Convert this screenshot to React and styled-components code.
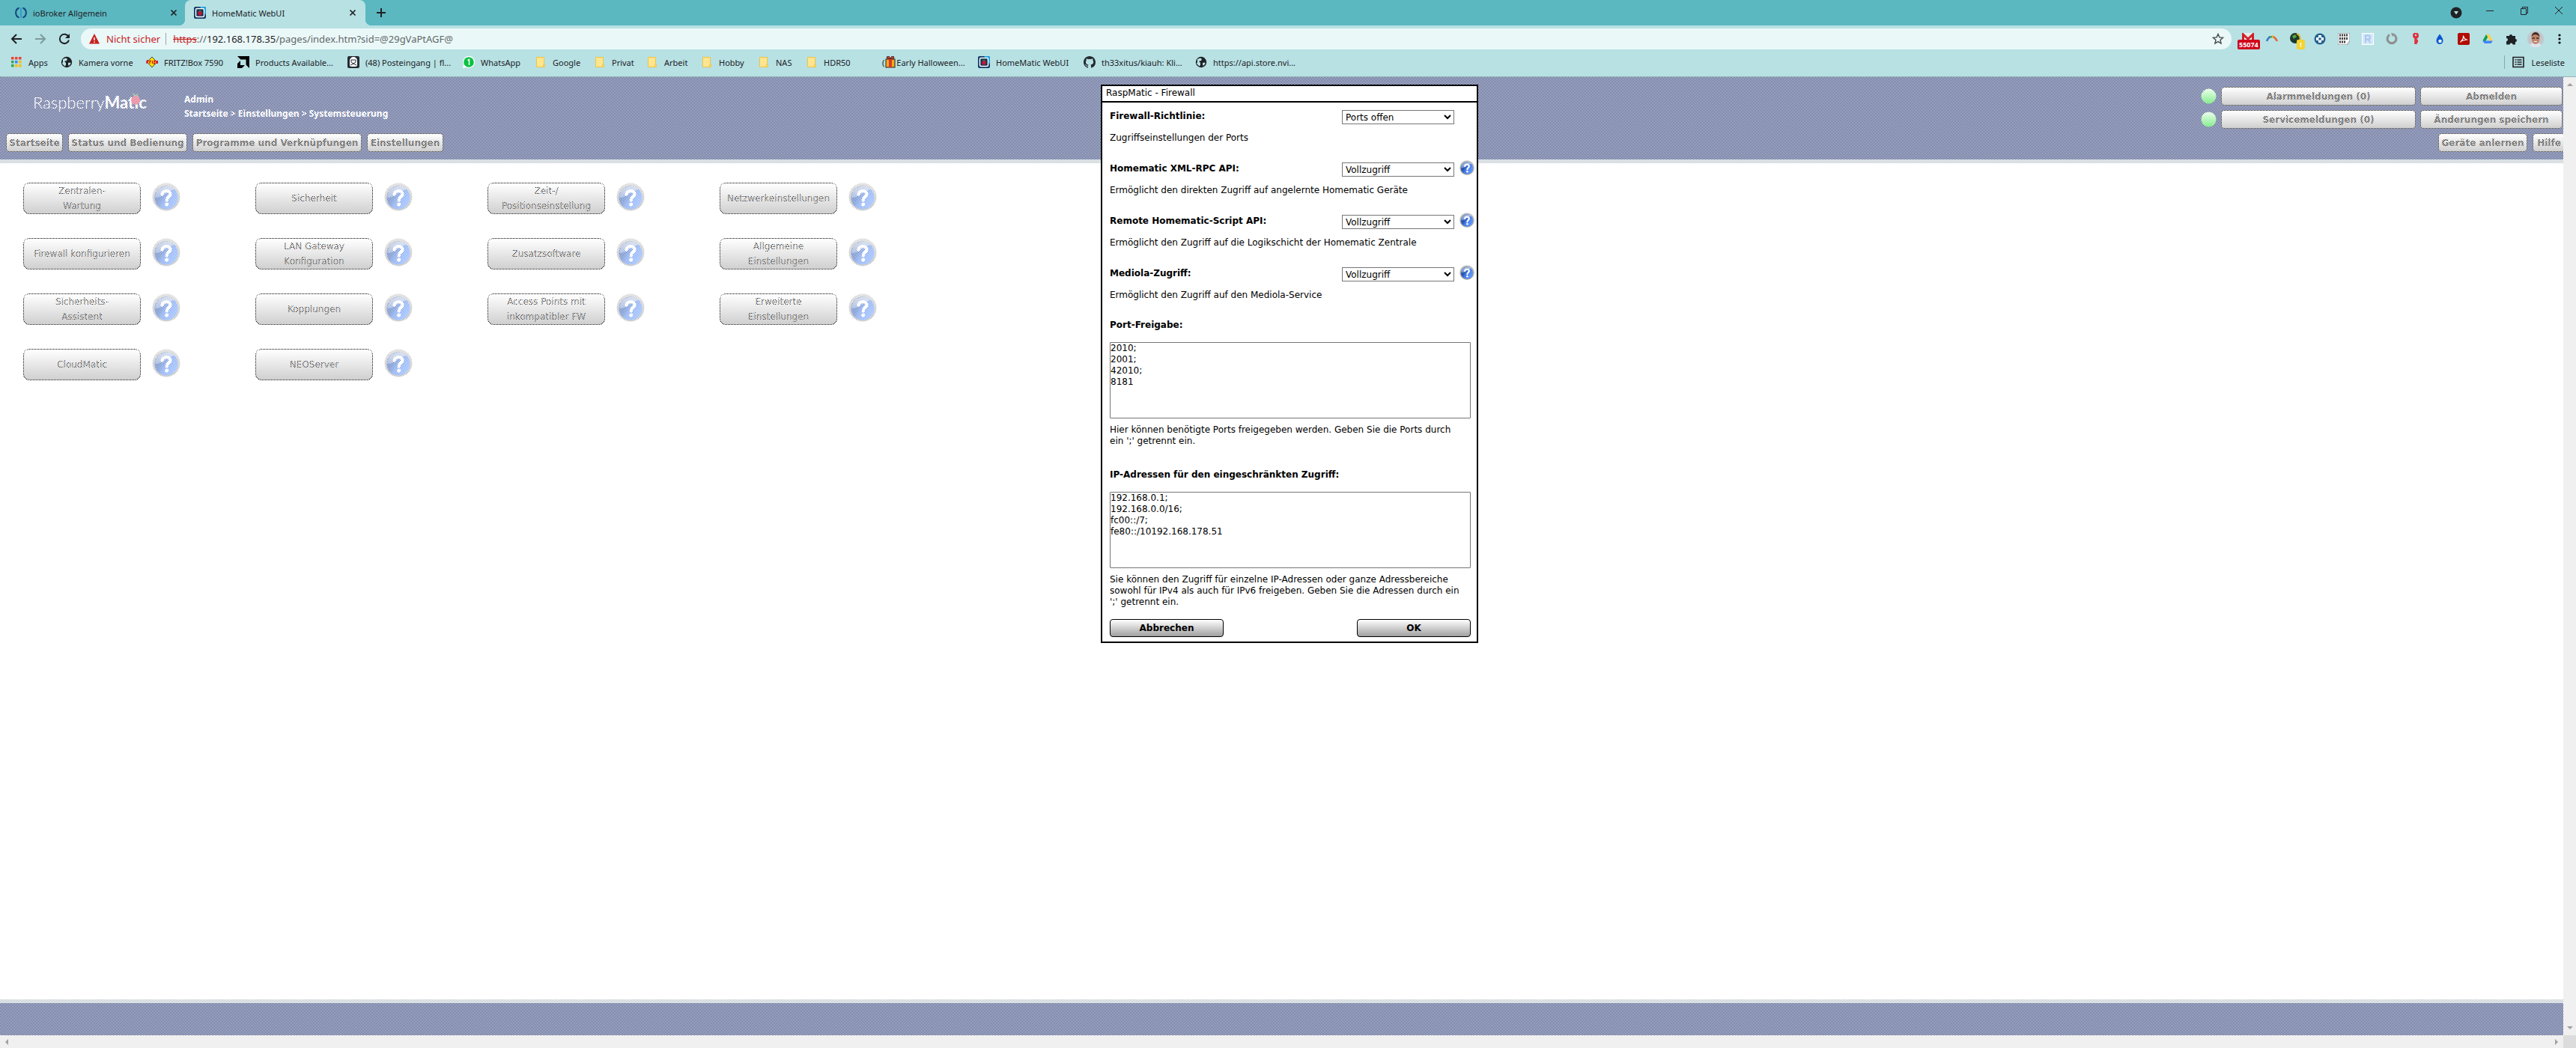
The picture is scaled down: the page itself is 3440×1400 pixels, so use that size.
import React from 'react';
import styled, { createGlobalStyle, css } from 'styled-components';

const ui = '"Noto Sans", "Open Sans", sans-serif';
const web = '"DejaVu Sans", Verdana, sans-serif';

const GlobalStyle = createGlobalStyle`
  * { box-sizing: border-box; }
  body { margin: 0; overflow: hidden; }
  button, select, textarea, input { font: inherit; color: inherit; margin: 0; }
  svg { display: block; flex: none; }
`;

/* ---------- browser frame ---------- */

const Browser = styled.div`
  height: 100vh;
  display: flex;
  flex-direction: column;
  font-family: ${ui};
  font-size: 11px;
  color: #202124;
  background: #b8e1e4;
`;
const TabStrip = styled.div`
  flex: none;
  height: 34px;
  display: flex;
  background: #5bb8c1;
`;
const Tab = styled.div`
  position: relative;
  width: ${p => (p.$active ? 241 : 247)}px;
  padding: 0 ${p => (p.$active ? 10 : 8)}px 0 ${p => (p.$active ? 12 : 20)}px;
  display: flex;
  align-items: center;
  gap: 8px;
  border-radius: 8px 8px 0 0;
  background: ${p => (p.$active ? '#b8e1e4' : 'transparent')};
  & > span { flex: 1; white-space: nowrap; }
  ${p => p.$active && css`
    &::before, &::after {
      content: '';
      position: absolute;
      bottom: 0;
      width: 8px;
      height: 8px;
    }
    &::before { left: -8px; background: radial-gradient(circle at 0 0, transparent 8px, #b8e1e4 8px); }
    &::after { right: -8px; background: radial-gradient(circle at 100% 0, transparent 8px, #b8e1e4 8px); }
  `}
`;
const IconButton = styled.button`
  display: grid;
  place-items: center;
  width: ${p => p.$w || 32}px;
  height: ${p => p.$h || 32}px;
  padding: 0;
  border: 0;
  background: none;
`;
const Spacer = styled.div`flex: 1;`;
const Toolbar = styled.div`
  flex: none;
  height: 36px;
  padding: 0 6px;
  display: flex;
  align-items: center;
`;
const NavButtons = styled.div`
  display: flex;
  width: 102px;
`;
const Omnibox = styled.div`
  flex: 1;
  height: 28px;
  display: flex;
  align-items: center;
  padding: 0 5px 0 11px;
  border-radius: 14px;
  background: #ebf8f8;
  font-size: 13px;
`;
const Insecure = styled.span`
  margin: 0 6px 0 9px;
  padding-right: 7px;
  border-right: 1px solid #9aa5a6;
  line-height: 16px;
  color: #c5221f;
  white-space: nowrap;
`;
const Url = styled.span`
  flex: 1;
  padding-left: 3px;
  color: #5f6868;
  s { color: #c5221f; }
  b { font-weight: 400; color: #202124; }
`;
const Extensions = styled.div`
  display: flex;
  padding-left: 6px;
`;
const Bookmarks = styled.nav`
  flex: none;
  height: 33px;
  padding: 0 15px 6px 14px;
  display: flex;
  align-items: center;
  border-bottom: 1px solid #93b4b6;
`;
const Bookmark = styled.a`
  flex: none;
  width: ${p => p.$w}px;
  display: flex;
  align-items: center;
  gap: ${p => (p.$tight ? 1 : 8)}px;
  color: inherit;
  text-decoration: none;
  white-space: nowrap;
`;
const ReadingList = styled.button`
  height: 18px;
  display: flex;
  align-items: center;
  gap: 9px;
  padding: 0 0 0 10px;
  border: 0;
  border-left: 1px solid #8aa9ab;
  background: none;
`;

/* ---------- scrolled page ---------- */

const Viewport = styled.div`
  flex: 1;
  min-height: 0;
  display: grid;
  grid-template: minmax(0, 1fr) 17px / minmax(0, 1fr) 17px;
  background: #f0f0f0;
`;
const Clip = styled.div`overflow: hidden;`;
const ScrollBar = styled.div`
  display: flex;
  flex-direction: ${p => (p.$vertical ? 'column' : 'row')};
  align-items: center;
  justify-content: space-between;
  padding: ${p => (p.$vertical ? '6px 0' : '0 6px')};
`;
const Corner = styled.div`background: #dcdcdc;`;
const Page = styled.div`
  position: relative;
  width: calc(100% + 21px);
  height: 100%;
  display: flex;
  flex-direction: column;
  font-family: ${web};
  font-size: 12px;
  color: #000;
  background: #fff;
`;
const Header = styled.header`
  flex: none;
  height: 115px;
  display: flex;
  justify-content: space-between;
  padding: 13px 18px 0 8px;
  background: #1b2c6c;
  border-bottom: 5px solid #b4c0c6;
`;
const HeaderSide = styled.div`
  display: flex;
  flex-direction: column;
  gap: 6px;
`;
const Brand = styled.div`
  height: 56px;
  display: flex;
  color: #fff;
`;
const Logo = styled.div`
  width: 238px;
  padding: 6px 0 0 36px;
  display: flex;
  font: 300 22px/30px Lato, sans-serif;
  b { font-weight: 700; }
`;
const LogoMark = styled.svg`
  position: absolute;
  top: 20px;
  left: 174px;
`;
const Crumbs = styled.div`
  padding-top: 7px;
  font-family: ${ui};
  font-size: 12px;
  font-weight: 700;
  line-height: 19px;
`;
const Row = styled.div`
  display: flex;
  align-items: center;
  gap: ${p => p.$gap || 6}px;
`;
const glossy = css`
  border: 1px solid #000;
  background: linear-gradient(#fff, #a0a0a0);
`;
const MenuButton = styled.button`
  ${glossy}
  width: ${p => p.$w}px;
  height: 25px;
  padding: 0;
  border-radius: 4px;
  font-size: 12px;
  font-weight: 700;
  white-space: nowrap;
`;
const StatusRow = styled(Row)`padding-right: 4px;`;
const ActionRow = styled(Row)`
  justify-content: flex-end;
`;
const Main = styled.main`
  flex: 1;
  display: grid;
  grid-template-columns: repeat(4, 310px);
  grid-auto-rows: 74px;
  padding: 26px 31px;
`;
const Entry = styled.div`
  display: flex;
  align-items: flex-start;
  gap: 15px;
`;
const EntryButton = styled.button`
  ${glossy}
  width: 157px;
  height: 42px;
  padding: 0;
  border-radius: 8px;
  font-size: 12px;
  line-height: 20px;
  white-space: pre-line;
`;
const HelpButton = styled.button`
  padding: 0;
  border: 0;
  background: none;
`;
const Footer = styled.footer`
  flex: none;
  height: 48px;
  background: #1b2c6c;
  border-top: 5px solid #b4c0c6;
`;

/* ---------- modal ---------- */

const Mask = styled.div`
  position: absolute;
  inset: 0;
  display: flex;
  justify-content: center;
  align-items: flex-start;
  padding-top: 10px;
  background: conic-gradient(#fff 25%, transparent 0 50%, #fff 0 75%, transparent 0) 0 0 / 2px 2px;
`;
const Dialog = styled.form`
  width: 504px;
  border: 2px solid #000;
  background: #fff;
  font-size: 12px;
  line-height: 15px;
`;
const DialogTitle = styled.div`
  padding: 2px 5px 3px;
  border-bottom: 2px solid #000;
`;
const DialogBody = styled.div`padding: 10px 0 6px 10px;`;
const Setting = styled.div`
  height: 70px;
  display: grid;
  grid-template: 30px 15px / 310px 150px 1fr;
  align-items: start;
  label { font-weight: 700; padding-top: 1px; }
  p { grid-column: 1 / -1; margin: 0; }
  ${HelpButton} { justify-self: start; margin: -3px 0 0 7px; }
`;
const Select = styled.select`
  width: 150px;
  height: 19px;
  padding: 0;
  border: 1px solid #767676;
  background: #fff;
`;
const Field = styled.div`
  display: flex;
  flex-direction: column;
  margin-bottom: ${p => p.$after}px;
  label { font-weight: 700; margin-bottom: 15px; }
  p { margin: 8px 0 0; white-space: nowrap; }
`;
const TextArea = styled.textarea`
  width: 482px;
  height: 102px;
  padding: 0;
  border: 1px solid #767676;
  border-radius: 1px;
  resize: none;
`;
const DialogActions = styled.div`
  display: flex;
  justify-content: space-between;
  width: 482px;
`;
const DialogButton = styled.button`
  ${glossy}
  width: 152px;
  height: 24px;
  padding: 0;
  border-radius: 4px;
  font-weight: 700;
`;

/* ---------- drawings ---------- */

const Help = ({ size }) => (
  <svg width={size} height={size} viewBox="0 0 38 38">
    <defs>
      <linearGradient id="rim" x1="0" y1="0" x2="0" y2="1">
        <stop offset="0" stopColor="#b4b4b4" /><stop offset="1" stopColor="#808080" />
      </linearGradient>
      <linearGradient id="ball" x1="0" y1="0" x2="1" y2=".6">
        <stop offset="0" stopColor="#1c479c" /><stop offset=".4" stopColor="#2455b4" />
        <stop offset=".6" stopColor="#4a7ee8" /><stop offset="1" stopColor="#5f98ff" />
      </linearGradient>
      <linearGradient id="shine" x1="0" y1="0" x2="0" y2="1">
        <stop offset="0" stopColor="#dfe4ee" /><stop offset="1" stopColor="#7f9cd8" />
      </linearGradient>
    </defs>
    <circle cx="19" cy="19" r="18.500" fill="url(#rim)" opacity=".75" />
    <circle cx="19" cy="20" r="15.500" fill="url(#ball)" />
    <path d="M4 20Q12 20 19 14Q27 9 30 9A15.500 15.500 0 0 0 4 20Z" fill="url(#shine)" opacity=".75" />
    <path d="M13.500 15.500C14 9.500 25 9.500 24.500 15.500C24.200 19 19.800 19 19.800 23.500" fill="none" stroke="#fff" strokeWidth="4" strokeLinecap="round" />
    <circle cx="19.700" cy="29" r="2.500" fill="#fff" />
  </svg>
);
const Led = () => (
  <svg width="21" height="21" viewBox="0 0 21 21">
    <defs>
      <linearGradient id="led" x1="0" y1="0" x2="0" y2="1">
        <stop offset="0" stopColor="#d8ffd8" /><stop offset="1" stopColor="#10d820" />
      </linearGradient>
    </defs>
    <circle cx="10.500" cy="10.500" r="10" fill="url(#led)" />
  </svg>
);
const Arrow = ({ d, w = 8, h = 8 }) => (
  <svg width={w} height={h} viewBox={`0 0 ${w} ${h}`}><path d={d} fill="#a0a0a0" /></svg>
);
const Line = ({ d, size = 16, w = 2, color = '#202124' }) => (
  <svg width={size} height={size} viewBox="0 0 16 16" fill="none" stroke={color} strokeWidth={w}><path d={d} /></svg>
);
const Close = () => <Line size={14} w={2} d="M4 4l8 8M12 4l-8 8" />;
const Globe = () => (
  <svg width="16" height="16" viewBox="0 0 16 16">
    <circle cx="8" cy="8" r="7.200" fill="#202124" />
    <path d="M3 4l4-1.500 2 1.500-1 2-3 1 2 2v3l-1.500 1.500L2 10l1-2zM10 9l3-.5.500 1.500-2.500 3-1-1.500z" fill="#b8e1e4" />
  </svg>
);
const Folder = () => (
  <svg width="16" height="16" viewBox="0 0 16 16">
    <path d="M2.500 1.500h10v10h1v3h-11z" fill="#ffe58f" stroke="#ecc545" />
    <path d="M11.500 14.500v-3h2" fill="none" stroke="#ecc545" />
  </svg>
);
const HomeMatic = () => (
  <svg width="16" height="16" viewBox="0 0 16 16">
    <rect width="16" height="16" rx="2" fill="#123a66" /><path d="M8 0h6a2 2 0 0 1 2 2v9z" fill="#1fa5e0" />
    <rect x="2.500" y="2.500" width="11" height="11" rx="1.500" fill="#1b3450" stroke="#fff" strokeWidth="1.500" />
    <circle cx="8" cy="8.800" r="2.800" fill="#c2143c" /><path d="M6 5.500h4L8 7z" fill="#3f9b46" />
  </svg>
);
const AppsGrid = () => {
  const c = ['#ea4335', '#ea4335', '#ea4335', '#34a853', '#4285f4', '#fbbc05', '#34a853', '#fbbc05', '#fbbc05'];
  return (
    <svg width="16" height="16" viewBox="0 0 16 16">
      {c.map((f, i) => <rect key={i} x={1 + (i % 3) * 5} y={1 + Math.floor(i / 3) * 5} width="3.500" height="3.500" fill={f} />)}
    </svg>
  );
};
const Fritz = () => (
  <svg width="16" height="16" viewBox="0 0 16 16">
    <path d="M8 1l6.500 7L8 15 1.500 8z" fill="#ffe100" stroke="#222" strokeWidth=".8" />
    <path d="M1 6v4M1 6h2.500M1 8h2M5 10V6.500h2M8.500 6v4M10 6.500h2L10.500 10H12M14 6v4M15.500 6v4" fill="none" stroke="#d0102a" strokeWidth="1.300" />
  </svg>
);
const Amd = () => (
  <svg width="16" height="16" viewBox="0 0 16 16"><path d="M0 0h16v16l-4.500-4.500v-7h-7zM4 6v6h6l-4 4H0V10z" fill="#000" /></svg>
);
const Mail = () => (
  <svg width="16" height="16" viewBox="0 0 16 16">
    <rect width="16" height="16" rx="2" fill="#252a33" />
    <path d="M3 13V6a5 5 0 0 1 10 0v7l-2 1H5z" fill="#fff" /><path d="M5 5h6v3l-3 2-3-2zM4 12l4-2 4 2" fill="none" stroke="#252a33" />
  </svg>
);
const WhatsApp = () => (
  <svg width="16" height="16" viewBox="0 0 16 16">
    <path d="M0 16l1-4.500A8 8 0 1 1 4.500 15z" fill="#fff" /><circle cx="8" cy="8" r="6.800" fill="#0bc143" />
    <path d="M6.500 5.500L8.500 4.500V12" fill="none" stroke="#fff" strokeWidth="1.500" />
  </svg>
);
const Gift = () => (
  <svg width="14" height="16" viewBox="0 0 14 16">
    <path d="M2 1l3-1 2 3 2-3 3 1-1 3H3z" fill="#d9382a" stroke="#222" strokeWidth=".8" />
    <rect x="1" y="4" width="12" height="11" fill="#f7a81b" stroke="#222" /><path d="M5 4h4v11H5z" fill="#d9382a" />
  </svg>
);
const GitHub = () => (
  <svg width="16" height="16" viewBox="0 0 16 16">
    <path fill="#24292f" d="M8 0C3.580 0 0 3.580 0 8c0 3.540 2.290 6.530 5.470 7.590.4.070.55-.17.55-.38 0-.19-.01-.82-.01-1.490-2.010.37-2.530-.49-2.690-.94-.09-.23-.48-.94-.82-1.130-.28-.15-.68-.52-.01-.53.63-.01 1.080.58 1.230.82.72 1.210 1.870.87 2.330.66.070-.52.28-.87.51-1.070-1.780-.2-3.640-.89-3.640-3.950 0-.87.31-1.590.82-2.150-.08-.2-.36-1.020.08-2.120 0 0 .67-.21 2.200.82a7.600 7.600 0 0 1 4 0c1.530-1.040 2.200-.82 2.200-.82.44 1.100.16 1.920.08 2.120.51.56.82 1.270.82 2.150 0 3.070-1.870 3.750-3.650 3.950.29.25.54.73.54 1.480 0 1.070-.01 1.930-.01 2.200 0 .21.15.46.55.38A8 8 0 0 0 16 8c0-4.420-3.580-8-8-8z" />
  </svg>
);
const IoBroker = () => (
  <svg width="16" height="16" viewBox="0 0 16 16" fill="none">
    <path d="M5.500 1.500a7 7 0 0 0 0 13M10.500 1.500a7 7 0 0 1 0 13" stroke="#144578" strokeWidth="2" /><path d="M8 1v14" stroke="#3399cc" strokeWidth="1.800" />
  </svg>
);
const Badge = styled.span`
  position: absolute;
  left: ${p => p.$x}px;
  bottom: -6px;
  padding: 0 2px;
  border-radius: 2px;
  background: ${p => p.$bg};
  color: #fff;
  font-size: 9px;
  font-weight: 700;
  line-height: 13px;
`;
const Badged = styled.span`position: relative;`;

const S = ({ children }) => <svg width="16" height="16" viewBox="0 0 16 16">{children}</svg>;
const extensions = [
  ['Gmail', <Badged><S><path d="M0 0h16v14H0z" fill="#e8eaea" /><path d="M1.500 14V2L8 8l6.500-6v12" fill="none" stroke="#d0202a" strokeWidth="3" /></S><Badge $x={-6} $bg="#d0021b">55074</Badge></Badged>],
  ['Bogen', <S><path d="M1 11Q3 6 6 5" fill="none" stroke="#3a78c8" strokeWidth="2.500" /><path d="M5 5.500L9 5" stroke="#3fa656" strokeWidth="2.500" /><path d="M8 4.500Q9.500 4.500 10.500 5.500" fill="none" stroke="#f0b429" strokeWidth="2.500" /><path d="M10 5Q13 7 15 11" fill="none" stroke="#e8622c" strokeWidth="2.500" /></S>],
  ['Weltkugel', <Badged><S><circle cx="7" cy="7" r="7" fill="#1d3a30" /><path d="M3 4l4-2 2 3-4 3z" fill="#5fa33c" /><path d="M9 1a7 7 0 0 1 2 12" fill="none" stroke="#e0b826" strokeWidth="2" /></S><Badge $x={9} $bg="#f5d32f">&nbsp;!&nbsp;</Badge></Badged>],
  ['Kreuz', <S><circle cx="8" cy="8" r="7.500" fill="#24628f" /><path d="M8 3v10M3 8h10" stroke="#fff" strokeWidth="4" /><path d="M8 6v4M6 8h4" stroke="#24628f" strokeWidth="1.500" /></S>],
  ['Bits', <S><path d="M0 0h16v11l-4 5H0z" fill="#f4f6f6" stroke="#888" /><path d="M2 3h12M2 7.500h12M2 12h8" stroke="#444" strokeWidth="3" strokeDasharray="2 1" /></S>],
  ['R', <S><rect x=".5" y=".5" width="15" height="15" fill="#d4e8f8" stroke="#fff" /><path d="M5 13V3.500h3.500a2.500 2.500 0 0 1 0 5H5M8 8.500l3.500 4.500" fill="none" stroke="#a8c8ee" strokeWidth="2" /></S>],
  ['Ring', <S><path d="M5 2.500a6 6 0 1 0 6 0" fill="none" stroke="#8d8f8f" strokeWidth="3" /><path d="M7 0l5 1-3 4z" fill="#8d8f8f" /></S>],
  ['Schlüssel', <S><circle cx="8" cy="3.500" r="4" fill="#e0303c" /><path d="M8 5v10M9 11h2" stroke="#e0303c" strokeWidth="3.500" /><circle cx="8" cy="3" r="1.200" fill="#b8e1e4" /></S>],
  ['Tropfen', <S><path d="M8 1.500Q12.500 7 12.500 10.500a4.500 4.500 0 0 1-9 0Q3.500 7 8 1.500z" fill="#0b57d0" /><circle cx="8.500" cy="11" r="2.300" fill="#e6f6f8" /></S>],
  ['PDF', <S><rect width="16" height="16" rx="2" fill="#b30b00" /><path d="M7.500 3.500Q8 8 4 12q-.500-1.500 8-3Q8 7.500 7.500 3.500z" fill="none" stroke="#fff" strokeWidth="1.200" /></S>],
  ['Drive', <S><path d="M6 2h4L4 13.500 1.500 10z" fill="#0f9d58" /><path d="M6 2h4l5 8.500h-4z" fill="#ffcf48" /><path d="M1.500 11L4 14h8.500l2.500-3.500H4z" fill="#4285f4" /></S>],
  ['Erweiterungen', <S><path d="M1 4h4a2 2 0 1 1 4 0h4v4a2 2 0 1 1 0 4v3.500H9.500a2 2 0 1 0-4 0H1V11a2 2 0 1 0 0-4z" fill="#202124" /></S>],
  ['Profil', <svg width="22" height="22" viewBox="0 0 22 22"><circle cx="11" cy="11" r="11" fill="#c3c6cc" /><path d="M3 19q8-7 16 0a11 11 0 0 1-16 0z" fill="#dfe4ee" /><ellipse cx="11" cy="10.500" rx="5.500" ry="7.500" fill="#c08468" /><path d="M5.500 8.500Q6 2 11 2t5.500 6.500Q14 5 11 5 7 5 5.500 8.500z" fill="#3e2a1e" /><path d="M6.500 10h3.500M12 10h3.500" stroke="#3a2c28" strokeWidth="1.500" /><path d="M9 14.500h4" stroke="#fff" /></svg>],
  ['Menü', <S><circle cx="8" cy="3" r="1.600" /><circle cx="8" cy="8" r="1.600" /><circle cx="8" cy="13" r="1.600" /></S>],
];

const bookmarks = [
  ['Apps', 67, AppsGrid], ['Kamera vorne', 114, Globe], ['FRITZ!Box 7590', 122, Fritz],
  ['Products Available...', 147, Amd], ['(48) Posteingang | fl...', 154, Mail], ['WhatsApp', 96, WhatsApp],
  ['Google', 79, Folder], ['Privat', 70, Folder], ['Arbeit', 73, Folder], ['Hobby', 76, Folder],
  ['NAS', 64, Folder], ['HDR50', 102, Folder], ['Early Halloween...', 128, Gift, '('],
  ['HomeMatic WebUI', 141, HomeMatic], ['th33xitus/kiauh: Kli...', 149, GitHub], ['https://api.store.nvi...', 150, Globe],
];

const entries = [
  'Zentralen-\nWartung', 'Sicherheit', 'Zeit-/\nPositionseinstellung', 'Netzwerkeinstellungen',
  'Firewall konfigurieren', 'LAN Gateway\nKonfiguration', 'Zusatzsoftware', 'Allgemeine\nEinstellungen',
  'Sicherheits-\nAssistent', 'Kopplungen', 'Access Points mit\ninkompatibler FW', 'Erweiterte\nEinstellungen',
  'CloudMatic', 'NEOServer',
];

const settings = [
  ['policy', 'Firewall-Richtlinie:', 'Ports offen', 'Zugriffseinstellungen der Ports', false],
  ['xmlrpc', 'Homematic XML-RPC API:', 'Vollzugriff', 'Ermöglicht den direkten Zugriff auf angelernte Homematic Geräte', true],
  ['script', 'Remote Homematic-Script API:', 'Vollzugriff', 'Ermöglicht den Zugriff auf die Logikschicht der Homematic Zentrale', true],
  ['mediola', 'Mediola-Zugriff:', 'Vollzugriff', 'Ermöglicht den Zugriff auf den Mediola-Service', true],
];

function FirewallDialog() {
  return (
    <Dialog role="dialog" aria-label="RaspMatic - Firewall">
      <DialogTitle>RaspMatic - Firewall</DialogTitle>
      <DialogBody>
        {settings.map(([id, label, value, text, help]) => (
          <Setting key={id}>
            <label htmlFor={id}>{label}</label>
            <Select id={id}><option>{value}</option></Select>
            {help ? <HelpButton type="button" aria-label="Hilfe"><Help size={20} /></HelpButton> : <span />}
            <p>{text}</p>
          </Setting>
        ))}
        <Field $after={30}>
          <label htmlFor="ports">Port-Freigabe:</label>
          <TextArea id="ports" spellCheck={false} defaultValue={'2010;\n2001;\n42010;\n8181'} />
          <p>Hier können benötigte Ports freigegeben werden. Geben Sie die Ports durch<br />ein ';' getrennt ein.</p>
        </Field>
        <Field $after={15}>
          <label htmlFor="ips">IP-Adressen für den eingeschränkten Zugriff:</label>
          <TextArea id="ips" spellCheck={false} defaultValue={'192.168.0.1;\n192.168.0.0/16;\nfc00::/7;\nfe80::/10192.168.178.51'} />
          <p>Sie können den Zugriff für einzelne IP-Adressen oder ganze Adressbereiche<br />sowohl für IPv4 als auch für IPv6 freigeben. Geben Sie die Adressen durch ein<br />';' getrennt ein.</p>
        </Field>
        <DialogActions>
          <DialogButton type="button">Abbrechen</DialogButton>
          <DialogButton type="button">OK</DialogButton>
        </DialogActions>
      </DialogBody>
    </Dialog>
  );
}

export default function App() {
  return (
    <Browser>
      <GlobalStyle />
      <TabStrip>
        <Tab><IoBroker /><span>ioBroker Allgemein</span><IconButton $w={14} $h={16} aria-label="Tab schließen"><Close /></IconButton></Tab>
        <Tab $active><HomeMatic /><span>HomeMatic WebUI</span><IconButton $w={14} $h={16} aria-label="Tab schließen"><Close /></IconButton></Tab>
        <IconButton $w={42} $h={34} aria-label="Neuer Tab"><Line d="M8 2v12M2 8h12" /></IconButton>
        <Spacer />
        <IconButton $w={44} $h={34} aria-label="Tabs durchsuchen">
          <svg width="16" height="16" viewBox="0 0 16 16"><circle cx="8" cy="8" r="7.500" fill="#202124" /><path d="M5 6h6l-3 4.500z" fill="#b8e1e4" /></svg>
        </IconButton>
        <IconButton $w={46} $h={28} aria-label="Minimieren"><Line w={1} d="M3 8.500h10" /></IconButton>
        <IconButton $w={46} $h={28} aria-label="Verkleinern"><Line w={1} d="M3.500 5.500h7v8h-7zM5.500 5V3.500h7v8H11" /></IconButton>
        <IconButton $w={46} $h={28} aria-label="Schließen"><Line w={1} d="M3 3l10 10M13 3L3 13" /></IconButton>
      </TabStrip>
      <Toolbar>
        <NavButtons>
          <IconButton aria-label="Zurück"><Line d="M15 8H2.500M8 2L2 8l6 6" /></IconButton>
          <IconButton aria-label="Vorwärts"><Line color="#7d9a9c" d="M1 8h12.500M8 2l6 6-6 6" /></IconButton>
          <IconButton aria-label="Neu laden"><svg width="16" height="16" viewBox="0 0 16 16"><path d="M13.500 5A6.200 6.200 0 1 0 14 9.500" fill="none" stroke="#202124" strokeWidth="2" /><path d="M15 1v6H9z" fill="#202124" /></svg></IconButton>
        </NavButtons>
        <Omnibox>
          <svg width="14" height="14" viewBox="0 0 14 14"><path d="M7 0l7 13.500H0z" fill="#c5221f" /><path d="M7 5v4M7 10.500v1.500" stroke="#fff" strokeWidth="1.500" /></svg>
          <Insecure>Nicht sicher</Insecure>
          <Url><s>https</s>://<b>192.168.178.35</b>/pages/index.htm?sid=@29gVaPtAGF@</Url>
          <IconButton $w={26} $h={28} aria-label="Lesezeichen">
            <svg width="16" height="16" viewBox="0 0 16 16"><path d="M8 1.500l1.900 4.400 4.700.4-3.600 3.100 1.100 4.700L8 11.600l-4.100 2.500L5 9.400 1.400 6.300l4.700-.4z" fill="none" stroke="#454a4d" strokeWidth="1.400" /></svg>
          </IconButton>
        </Omnibox>
        <Extensions>
          {extensions.map(([name, icon]) => <IconButton key={name} aria-label={name}>{icon}</IconButton>)}
        </Extensions>
      </Toolbar>
      <Bookmarks>
        {bookmarks.map(([name, w, Icon, lead]) => (
          <Bookmark key={name} href="#" $w={w} $tight={!!lead}>{lead}<Icon />{name}</Bookmark>
        ))}
        <Spacer />
        <ReadingList>
          <svg width="16" height="16" viewBox="0 0 16 16"><path d="M1 1.500h14v13H1z" fill="none" stroke="#202124" strokeWidth="1.600" /><path d="M3.500 5h2M3.500 8h2M3.500 11h2M6.500 5h6M6.500 8h6M6.500 11h6" stroke="#202124" strokeWidth="1.500" /></svg>
          Leseliste
        </ReadingList>
      </Bookmarks>
      <Viewport>
        <Clip>
          <Page>
            <Header>
              <HeaderSide>
                <Brand>
                  <Logo>Raspberry<b>Matic</b></Logo>
                  <LogoMark width="14" height="18" viewBox="0 0 14 18"><path d="M3 1l4 3 4-3-2 5H5z" fill="#6c8f5a" /><circle cx="7" cy="11" r="6" fill="#d8385c" /></LogoMark>
                  <Crumbs>Admin<br />Startseite &gt; Einstellungen &gt; Systemsteuerung</Crumbs>
                </Brand>
                <Row $gap={7}>
                  <MenuButton $w={76}>Startseite</MenuButton>
                  <MenuButton $w={159}>Status und Bedienung</MenuButton>
                  <MenuButton $w={226}>Programme und Verknüpfungen</MenuButton>
                  <MenuButton $w={102}>Einstellungen</MenuButton>
                </Row>
              </HeaderSide>
              <HeaderSide>
                <StatusRow><Led /><MenuButton $w={260}>Alarmmeldungen (0)</MenuButton><MenuButton $w={190}>Abmelden</MenuButton></StatusRow>
                <StatusRow><Led /><MenuButton $w={260}>Servicemeldungen (0)</MenuButton><MenuButton $w={190}>Änderungen speichern</MenuButton></StatusRow>
                <ActionRow $gap={7}><MenuButton $w={119}>Geräte anlernen</MenuButton><MenuButton $w={44}>Hilfe</MenuButton></ActionRow>
              </HeaderSide>
            </Header>
            <Main>
              {entries.map(name => (
                <Entry key={name}>
                  <EntryButton>{name}</EntryButton>
                  <HelpButton aria-label="Hilfe"><Help size={38} /></HelpButton>
                </Entry>
              ))}
            </Main>
            <Footer />
            <Mask><FirewallDialog /></Mask>
          </Page>
        </Clip>
        <ScrollBar $vertical>
          <Arrow w={8} h={8} d="M0 6l4-4 4 4z" />
          <Arrow w={8} h={8} d="M0 2l4 4 4-4z" />
        </ScrollBar>
        <ScrollBar>
          <Arrow d="M5 0v8L1 4z" />
          <Arrow d="M3 0v8l4-4z" />
        </ScrollBar>
        <Corner />
      </Viewport>
    </Browser>
  );
}
